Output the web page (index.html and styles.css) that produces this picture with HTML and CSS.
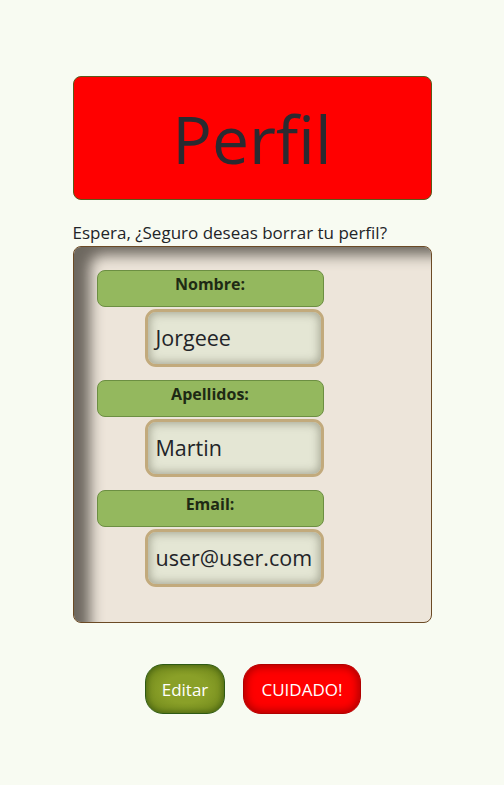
FILE: index.html
```html
<!DOCTYPE html>
<html lang="es">
<head>
<meta charset="utf-8">
<title>Perfil</title>
<link rel="stylesheet" href="styles.css">
</head>
<body>
<main class="page">
  <header class="banner"><h1 class="banner-title">Perfil</h1></header>
  <p class="warning">Espera, ¿Seguro deseas borrar tu perfil?</p>
  <section class="card">
    <div class="field">
      <div class="label">Nombre:</div>
      <div class="value">Jorgeee</div>
    </div>
    <div class="field">
      <div class="label">Apellidos:</div>
      <div class="value">Martin</div>
    </div>
    <div class="field">
      <div class="label">Email:</div>
      <div class="value">user@user.com</div>
    </div>
  </section>
  <div class="actions">
    <button class="btn btn-edit">Editar</button>
    <button class="btn btn-danger">CUIDADO!</button>
  </div>
</main>
</body>
</html>
```
FILE: styles.css
```css
html, body {
  margin: 0;
  padding: 0;
}
body {
  background: #f8fbf2;
  font-family: "Open Sans", "Noto Sans", sans-serif;
  color: #222428;
}
.page {
  width: 359px;
  margin: 0 auto;
  padding-top: 76px;
}
.banner {
  height: 122px;
  background: #ff0000;
  border: 1px solid #5a5a1a;
  border-radius: 8px;
  display: flex;
  align-items: center;
  justify-content: center;
}
.banner-title {
  margin: 0;
  font-weight: 400;
  font-size: 66px;
  line-height: 1;
  color: #2a2a30;
}
.warning {
  margin: 19px 0 0;
  font-size: 17px;
  line-height: 27px;
  color: #222428;
}
.card {
  height: 377px;
  box-sizing: border-box;
  background: #ede5da;
  border: 1px solid #6b4a25;
  border-radius: 8px;
  box-shadow: inset 22px 14px 14px -6px rgba(95, 90, 82, 0.9);
  padding: 23px 0 0 23px;
  display: flex;
  flex-direction: column;
  gap: 13px;
}
.field {
  display: flex;
  flex-direction: column;
  align-items: flex-end;
  width: 227px;
  gap: 2px;
}
.label {
  width: 100%;
  box-sizing: border-box;
  height: 37px;
  background: #94b85e;
  border: 1px solid #6c8f42;
  border-radius: 8px;
  text-align: center;
  font-weight: 700;
  font-size: 16px;
  line-height: 27px;
  color: #1e2a14;
}
.value {
  width: 179px;
  height: 58px;
  box-sizing: border-box;
  background: #e4e6d4;
  border: 3px solid #c2aa7c;
  border-radius: 11px;
  box-shadow: inset 0 0 8px 2px rgba(120, 120, 100, 0.55);
  font-size: 21.5px;
  line-height: 52px;
  padding-left: 8px;
  color: #222428;
  white-space: nowrap;
}
.actions {
  display: flex;
  justify-content: center;
  gap: 18px;
  margin-top: 41px;
  padding-left: 2px;
}
.btn {
  height: 50px;
  border-radius: 18px;
  font-family: inherit;
  font-size: 17px;
  color: #ffffff;
  cursor: pointer;
  padding: 0;
}
.btn-edit {
  width: 80px;
  background: radial-gradient(ellipse at center, #8aa028 40%, #6a8218 100%);
  border: 1px solid #2e5a14;
  box-shadow: inset 0 0 6px 1px rgba(40, 70, 10, 0.6);
}
.btn-danger {
  width: 118px;
  background: #ff0000;
  border: 1px solid #b00000;
  box-shadow: inset 0 0 8px 2px rgba(150, 0, 0, 0.8);
}
```
